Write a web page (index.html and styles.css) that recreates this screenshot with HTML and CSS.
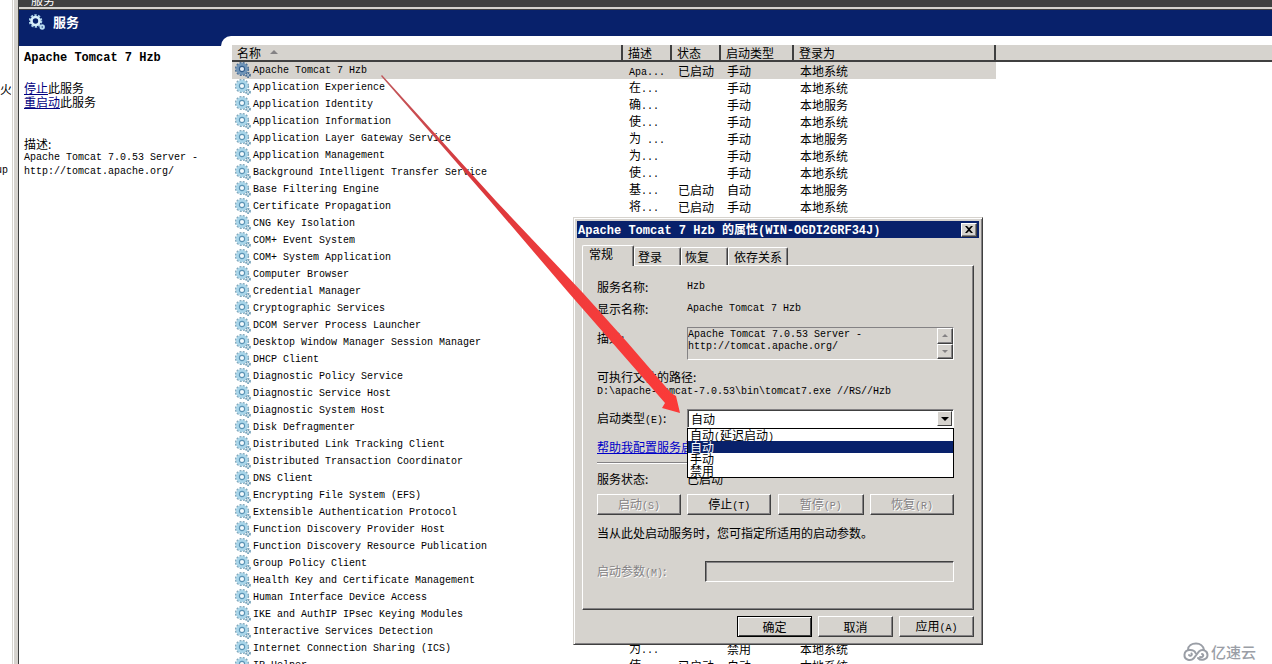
FILE: index.html
```
<!DOCTYPE html>
<html lang="zh-CN">
<head>
<meta charset="utf-8">
<title>服务</title>
<link rel="stylesheet" href="styles.css">
</head>
<body>
<svg class="defs" aria-hidden="true">
  <symbol id="gear" viewBox="0 0 16 16">
    <circle cx="7" cy="7" r="6" fill="none" stroke="#7fa6ba" stroke-width="2.200" stroke-dasharray="1.9 1.240"/>
    <circle cx="7" cy="7" r="4.500" fill="none" stroke="#a9d6ea" stroke-width="3"/>
    <circle cx="7" cy="7" r="2.600" fill="#f4fafd" stroke="#5a93b4" stroke-width="1.100"/>
    <circle cx="13" cy="13" r="1.900" fill="#e6f3f8" stroke="#6f9db6" stroke-width="2" stroke-dasharray="1.300 .69"/>
  </symbol>
  <symbol id="gear-selected" viewBox="0 0 16 16">
    <circle cx="7" cy="7" r="6" fill="none" stroke="#4a6d94" stroke-width="2.200" stroke-dasharray="1.9 1.240"/>
    <circle cx="7" cy="7" r="4.500" fill="none" stroke="#6f94b8" stroke-width="3"/>
    <circle cx="7" cy="7" r="2.600" fill="#e2eaf3" stroke="#2f5c8c" stroke-width="1.100"/>
    <circle cx="13" cy="13" r="1.900" fill="#b4c8dc" stroke="#46698e" stroke-width="2" stroke-dasharray="1.300 .69"/>
  </symbol>
</svg>
<div class="screen">
  <aside class="sliver"><span class="sliver-a">火焰</span><span class="sliver-b">up</span></aside>
  <main class="console">
    <div class="strip"><span>服务</span></div>
    <header class="banner">
      <svg class="banner-icon" viewBox="0 0 16 16"><circle cx="6.500" cy="7" r="5.600" fill="none" stroke="#a9d0e8" stroke-width="2.400" stroke-dasharray="2.200 1.320"/><circle cx="6.500" cy="7" r="4" fill="none" stroke="#d8eefa" stroke-width="2.600"/><circle cx="13.200" cy="13" r="1.700" fill="none" stroke="#b9dcf0" stroke-width="2"/></svg>
      <h1>服务</h1>
    </header>
    <div class="body">
      <section class="info">
        <h2>Apache Tomcat 7 Hzb</h2>
        <p class="actions"><a href="#">停止</a>此服务<br><a href="#">重启动</a>此服务</p>
        <p class="desc">描述:<span class="en">Apache Tomcat 7.0.53 Server -<br>http://tomcat.apache.org/</span></p>
      </section>
      <section class="list">
        <table>
          <colgroup><col class="c-name"><col class="c-desc"><col class="c-state"><col class="c-type"><col class="c-logon"><col></colgroup>
          <thead><tr><th>名称<i class="sort"></i></th><th>描述</th><th>状态</th><th>启动类型</th><th>登录为</th><th></th></tr></thead>
          <tbody>
            <tr class="selected"><td><svg><use href="#gear-selected"/></svg>Apache Tomcat 7 Hzb</td><td><span class="en">Apa...</span></td><td>已启动</td><td>手动</td><td>本地系统</td><td></td></tr>
            <tr><td><svg><use href="#gear"/></svg>Application Experience</td><td>在<span class="en">...</span></td><td></td><td>手动</td><td>本地系统</td><td></td></tr>
            <tr><td><svg><use href="#gear"/></svg>Application Identity</td><td>确<span class="en">...</span></td><td></td><td>手动</td><td>本地服务</td><td></td></tr>
            <tr><td><svg><use href="#gear"/></svg>Application Information</td><td>使<span class="en">...</span></td><td></td><td>手动</td><td>本地系统</td><td></td></tr>
            <tr><td><svg><use href="#gear"/></svg>Application Layer Gateway Service</td><td>为<span class="en"> ...</span></td><td></td><td>手动</td><td>本地服务</td><td></td></tr>
            <tr><td><svg><use href="#gear"/></svg>Application Management</td><td>为<span class="en">...</span></td><td></td><td>手动</td><td>本地系统</td><td></td></tr>
            <tr><td><svg><use href="#gear"/></svg>Background Intelligent Transfer Service</td><td>使<span class="en">...</span></td><td></td><td>手动</td><td>本地系统</td><td></td></tr>
            <tr><td><svg><use href="#gear"/></svg>Base Filtering Engine</td><td>基<span class="en">...</span></td><td>已启动</td><td>自动</td><td>本地服务</td><td></td></tr>
            <tr><td><svg><use href="#gear"/></svg>Certificate Propagation</td><td>将<span class="en">...</span></td><td>已启动</td><td>手动</td><td>本地系统</td><td></td></tr>
            <tr><td><svg><use href="#gear"/></svg>CNG Key Isolation</td></tr>
            <tr><td><svg><use href="#gear"/></svg>COM+ Event System</td></tr>
            <tr><td><svg><use href="#gear"/></svg>COM+ System Application</td></tr>
            <tr><td><svg><use href="#gear"/></svg>Computer Browser</td></tr>
            <tr><td><svg><use href="#gear"/></svg>Credential Manager</td></tr>
            <tr><td><svg><use href="#gear"/></svg>Cryptographic Services</td></tr>
            <tr><td><svg><use href="#gear"/></svg>DCOM Server Process Launcher</td></tr>
            <tr><td><svg><use href="#gear"/></svg>Desktop Window Manager Session Manager</td></tr>
            <tr><td><svg><use href="#gear"/></svg>DHCP Client</td></tr>
            <tr><td><svg><use href="#gear"/></svg>Diagnostic Policy Service</td></tr>
            <tr><td><svg><use href="#gear"/></svg>Diagnostic Service Host</td></tr>
            <tr><td><svg><use href="#gear"/></svg>Diagnostic System Host</td></tr>
            <tr><td><svg><use href="#gear"/></svg>Disk Defragmenter</td></tr>
            <tr><td><svg><use href="#gear"/></svg>Distributed Link Tracking Client</td></tr>
            <tr><td><svg><use href="#gear"/></svg>Distributed Transaction Coordinator</td></tr>
            <tr><td><svg><use href="#gear"/></svg>DNS Client</td></tr>
            <tr><td><svg><use href="#gear"/></svg>Encrypting File System (EFS)</td></tr>
            <tr><td><svg><use href="#gear"/></svg>Extensible Authentication Protocol</td></tr>
            <tr><td><svg><use href="#gear"/></svg>Function Discovery Provider Host</td></tr>
            <tr><td><svg><use href="#gear"/></svg>Function Discovery Resource Publication</td></tr>
            <tr><td><svg><use href="#gear"/></svg>Group Policy Client</td></tr>
            <tr><td><svg><use href="#gear"/></svg>Health Key and Certificate Management</td></tr>
            <tr><td><svg><use href="#gear"/></svg>Human Interface Device Access</td></tr>
            <tr><td><svg><use href="#gear"/></svg>IKE and AuthIP IPsec Keying Modules</td></tr>
            <tr><td><svg><use href="#gear"/></svg>Interactive Services Detection</td></tr>
            <tr><td><svg><use href="#gear"/></svg>Internet Connection Sharing (ICS)</td><td>为<span class="en">...</span></td><td></td><td>禁用</td><td>本地系统</td><td></td></tr>
            <tr><td><svg><use href="#gear"/></svg>IP Helper</td><td>使<span class="en">...</span></td><td>已启动</td><td>自动</td><td>本地系统</td><td></td></tr>
          </tbody>
        </table>
      </section>
    </div>
  </main>

  <section class="dialog" role="dialog" aria-labelledby="dlg-title">
    <header class="titlebar">
      <h2 id="dlg-title">Apache Tomcat 7 Hzb <span>的属性</span>(WIN-OGDI2GRF34J)</h2>
      <button type="button" class="close" aria-label="关闭"><svg viewBox="0 0 8 7"><path d="M0 0h2l2 2 2-2h2L5 3.500 8 7H6L4 5 2 7H0l3-3.500z"/></svg></button>
    </header>
    <nav class="tabs">
      <button type="button" class="tab active">常规</button><button type="button" class="tab">登录</button><button type="button" class="tab">恢复</button><button type="button" class="tab wide">依存关系</button>
    </nav>
    <form class="panel">
      <div class="row"><span class="label">服务名称:</span><span class="en">Hzb</span></div>
      <div class="row"><span class="label">显示名称:</span><span class="en">Apache Tomcat 7 Hzb</span></div>
      <div class="row row-desc">
        <label class="label" for="desc">描述:</label>
        <div class="memo">
          <textarea id="desc" class="en" readonly>Apache Tomcat 7.0.53 Server -
http://tomcat.apache.org/</textarea>
          <div class="scroll"><button type="button" aria-label="上"><i class="up"></i></button><button type="button" aria-label="下"><i class="down"></i></button></div>
        </div>
      </div>
      <div class="path">可执行文件的路径:<span class="en">D:\apache-tomcat-7.0.53\bin\tomcat7.exe //RS//Hzb</span></div>
      <div class="row row-type">
        <label class="label" for="type">启动类型<span class="en">(E)</span>:</label>
        <div class="combo">
          <select id="type"><option>自动</option></select>
          <span class="arrow"><i class="down"></i></span>
          <ul class="options"><li>自动<span class="en">(</span>延迟启动<span class="en">)</span></li><li class="on">自动</li><li>手动</li><li>禁用</li></ul>
        </div>
      </div>
      <a class="help" href="#">帮助我配置服务启动选项。</a>
      <hr>
      <div class="row"><span class="label">服务状态:</span><span>已启动</span></div>
      <div class="controls">
        <button type="button" disabled>启动<span class="en">(S)</span></button>
        <button type="button">停止<span class="en">(T)</span></button>
        <button type="button" disabled>暂停<span class="en">(P)</span></button>
        <button type="button" disabled>恢复<span class="en">(R)</span></button>
      </div>
      <p class="note">当从此处启动服务时，您可指定所适用的启动参数。</p>
      <div class="params"><label for="params">启动参数<span class="en">(M)</span>:</label><input id="params" type="text" disabled></div>
    </form>
    <footer class="footer">
      <button type="button" class="default">确定</button>
      <button type="button">取消</button>
      <button type="button">应用<span class="en">(A)</span></button>
    </footer>
  </section>

  <svg class="pointer" viewBox="0 0 300 340" aria-hidden="true"><defs><linearGradient id="fade" x1="0" y1="0" x2="1" y2="1"><stop offset="0" stop-color="#c0585c"/><stop offset=".3" stop-color="#d8383c"/><stop offset=".6" stop-color="#f03c3c"/><stop offset="1" stop-color="#fb3a38"/></linearGradient></defs><path d="M0 1 L1 0 L115 126 L202 218 L246 267 L290 318 L295 321 L299 338 L281 333 L284 328 L187 217 L110 127 Z" fill="url(#fade)"/></svg>

  <div class="brand">
    <svg viewBox="0 0 26 20" fill="none" stroke="#9a9ea6" stroke-width="2" stroke-linecap="round"><path d="M5 8C5 3.500 9 1.500 13 1.500S20.500 4 21 8"/><path d="M12.500 11C11 7 2 6.500 1.500 12.500S8 19 10.500 16.500L16 9.500C19 6.500 24.500 8.500 24.500 13S18 19.500 15 16"/><path d="M6 13C7 14.500 9.500 13.500 8.500 11.500M17 15C20 16 21.500 12.500 19 12"/></svg>
    <span>亿速云</span>
  </div>
</div>
</body>
</html>
```
FILE: styles.css
```
* { box-sizing: border-box; }
body {
  margin: 0;
  background: #fff;
  color: #000;
  font: 12px/14px "Noto Sans CJK SC", sans-serif;
}
h1, h2, p, ul { margin: 0; padding: 0; }
button, input, select, textarea { font: inherit; color: inherit; margin: 0; border-radius: 0; }
.defs { position: absolute; width: 0; height: 0; }
.en { font: 10px/10px "Liberation Mono", monospace; white-space: pre; }

.screen { position: relative; display: flex; height: 100vh; overflow: hidden; }
.sliver {
  flex: none;
  width: 19px;
  padding-top: 82px;
  display: flex;
  flex-direction: column;
  gap: 68px;
  border-right: 1px solid #404040;
  background: linear-gradient(to right, #fff 12px, #d6d3ce 12px, #d6d3ce 13px, #fff 13px, #fff 14px, #d6d3ce 14px);
}
.sliver span { width: 11px; overflow: hidden; white-space: nowrap; }
.sliver .sliver-b { width: 8px; direction: rtl; font: 10px/14px "Liberation Mono", monospace; }
.console { flex: 1; min-width: 0; display: flex; flex-direction: column; }
.strip {
  flex: none;
  height: 9px;
  padding-left: 12px;
  display: flex;
  align-items: flex-end;
  overflow: hidden;
  background: #404040;
  border-bottom: 2px solid #d6d3ce;
  color: #fff;
  line-height: 14px;
}
.banner {
  flex: none;
  height: 27px;
  padding: 4px 10px;
  display: flex;
  gap: 8px;
  background: #08216b;
  border-top: 1px solid #404040;
}
.banner-icon { width: 16px; height: 16px; }
.banner h1 { color: #fff; font-size: 13px; line-height: 16px; }
.body { flex: 1; min-height: 0; display: flex; background: #08216b; }
.info { flex: none; width: 202px; padding: 5px; background: #fff; border-top: 10px solid #08216b; }
.info h2 { font: bold 12px/14px "Liberation Mono", monospace; white-space: nowrap; }
.info a { color: #000080; }
.actions { margin-top: 16px; }
.desc { margin-top: 28px; }
.desc .en { display: block; line-height: 14px; }
.list { flex: 1; min-width: 0; padding: 9px 0 0 11px; background: #fff; border-top-left-radius: 10px; overflow: hidden; }

table { width: 100%; table-layout: fixed; border-collapse: separate; border-spacing: 0; }
.c-name { width: 391px; }
.c-desc { width: 49px; }
.c-state { width: 49px; }
.c-type { width: 73px; }
.c-logon { width: 202px; }
th {
  height: 17px;
  padding: 0 5px;
  background: #d6d3ce;
  border-right: 2px solid #404040;
  border-bottom: 2px solid #404040;
  font-weight: normal;
  line-height: 15px;
  text-align: left;
  white-space: nowrap;
}
th:last-child { border-right: 0; }
td { height: 17px; padding: 0 0 1px 6px; line-height: 15px; white-space: nowrap; overflow: hidden; }
td:first-child { padding: 0 0 0 3px; font: 10px/17px "Liberation Mono", monospace; }
td svg { width: 16px; height: 16px; margin-right: 2px; vertical-align: top; }
.selected td { background: #d6d3ce; }
.selected td:last-child { background: #fff; }
.sort { display: inline-block; margin-left: 9px; vertical-align: 4px; border: 4px solid transparent; border-top: 0; border-bottom-color: #848284; }

.dialog {
  position: absolute;
  left: 573px;
  top: 217px;
  width: 410px;
  padding: 3px 3px 7px;
  background: #d6d3ce;
  border: 1px solid #d6d3ce;
  border-right-color: #404040;
  border-bottom-color: #404040;
  box-shadow: inset 1px 1px #fff, inset -1px -1px #848284;
}
.titlebar { height: 17px; display: flex; align-items: center; justify-content: space-between; padding: 0 2px 0 1px; background: #08216b; color: #fff; }
.titlebar h2 { font: bold 12px/16px "Liberation Mono", monospace; white-space: pre; }
.titlebar span { font-family: "Noto Sans CJK SC", sans-serif; }
button {
  padding: 0;
  background: #d6d3ce;
  border: 1px solid;
  border-color: #fff #404040 #404040 #fff;
  box-shadow: inset -1px -1px #848284;
  white-space: nowrap;
}
.close { width: 16px; height: 14px; display: grid; place-items: center; }
.close svg { width: 8px; height: 7px; }
.tabs { display: flex; align-items: flex-end; padding: 7px 5px 0; }
.tab { height: 18px; width: 47px; padding: 0 3px; text-align: left; border-bottom: 0; border-radius: 2px 2px 0 0; box-shadow: inset -1px 0 #848284; line-height: 16px; }
.tab.active { position: relative; z-index: 1; width: 52px; height: 21px; margin-bottom: -1px; padding: 0 6px 4px; }
.tab.wide { width: 60px; padding-left: 5px; }
.panel {
  margin: 0 5px;
  padding: 14px 19px 27px 14px;
  border: 1px solid;
  border-color: #fff #404040 #404040 #fff;
  box-shadow: inset -1px -1px #848284;
}
.row { display: flex; align-items: center; height: 14px; margin-bottom: 8px; }
.row .label { flex: none; width: 90px; }
.row-desc { height: 33px; margin: 11px 0 10px; }
.row-desc .label { align-self: flex-start; padding-top: 4px; }
.memo { flex: 1; height: 33px; display: flex; border: 1px solid; border-color: #848284 #fff #fff #848284; }
.memo textarea { flex: 1; min-width: 0; padding: 1px 0; border: 0; background: transparent; resize: none; overflow: hidden; line-height: 12px; outline: 0; }
.scroll { width: 16px; display: flex; flex-direction: column; }
.scroll button { flex: 1; display: grid; place-items: center; }
.up, .down { border: 3px solid transparent; }
.up { border-top: 0; border-bottom-color: #848284; }
.down { border-bottom: 0; border-top-color: #848284; }
.path { margin-bottom: 10px; white-space: nowrap; }
.path .en { display: block; line-height: 15px; }
.row-type { height: 19px; margin-bottom: 12px; }
.combo { position: relative; flex: 1; height: 19px; display: flex; border: 1px solid; border-color: #848284 #fff #fff #848284; background: #fff; box-shadow: inset 1px 1px #404040; }
.combo select { flex: 1; appearance: none; border: 0; background: transparent; padding: 0 3px; line-height: 17px; outline: 0; }
.arrow { width: 15px; margin: 1px; display: grid; place-items: center; background: #d6d3ce; border: 1px solid; border-color: #fff #404040 #404040 #fff; }
.arrow .down { border-width: 4px; border-bottom: 0; border-top-color: #000; }
.options { position: absolute; z-index: 2; left: -1px; right: -1px; top: 18px; border: 1px solid #000; background: #fff; list-style: none; }
.options li { height: 12px; padding-left: 2px; line-height: 12px; }
.options .on { background: #08216b; color: #fff; }
.help { display: block; color: #0000c8; white-space: nowrap; }
hr { margin: 8px 0; border: 0; border-top: 1px solid #848284; border-bottom: 1px solid #fff; }
.controls { display: grid; grid-template-columns: 84px 84px 86px 84px; justify-content: space-between; }
.controls button, .footer button { height: 21px; }
button:disabled, .params { color: #848284; text-shadow: 1px 1px #fff; }
.note { margin-top: 11px; }
.params { display: flex; align-items: center; margin-top: 21px; }
.params label { width: 108px; }
.params input { flex: 1; min-width: 0; height: 21px; border: 1px solid; border-color: #404040 #fff #fff #404040; box-shadow: inset 1px 1px #848284; background: #d6d3ce; }
.footer { display: flex; justify-content: flex-end; gap: 6px; padding: 6px 5px 0; }
.footer button { width: 75px; }
.footer .default { border-color: #000; box-shadow: inset 1px 1px #fff, inset -1px -1px #404040; }

.pointer { position: absolute; left: 381px; top: 75px; width: 300px; height: 340px; pointer-events: none; }
.brand { position: absolute; right: 16px; bottom: 2px; display: flex; align-items: center; gap: 2px; color: #9a9ea6; font-size: 15px; line-height: 20px; font-weight: 500; }
.brand svg { width: 26px; height: 20px; }
```
